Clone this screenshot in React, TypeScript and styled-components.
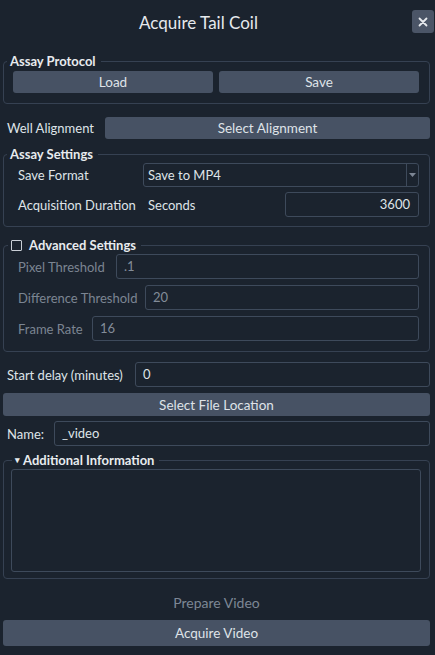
import React from 'react';
import styled, { createGlobalStyle } from 'styled-components';

const GlobalStyle = createGlobalStyle`
  html, body {
    margin: 0;
    padding: 0;
    background: #1b232e;
  }
  body {
    font-family: Lato, "Noto Sans", sans-serif;
    font-size: 13px;
    color: #dfe3e8;
  }
`;

export default function App() {
  return (
    <>
      <GlobalStyle />
      <Dialog>
        <Header>
          <Title>Acquire Tail Coil</Title>
          <CloseButton aria-label="close">
            <svg width="10" height="10" viewBox="0 0 10 10">
              <path d="M1.5 1.5 L8.5 8.5 M8.5 1.5 L1.5 8.5" stroke="#e6e9ed" strokeWidth="1.8" strokeLinecap="round" />
            </svg>
          </CloseButton>
        </Header>

        <Group>
          <Legend>Assay Protocol</Legend>
          <ButtonPair>
            <Button>Load</Button>
            <Button>Save</Button>
          </ButtonPair>
        </Group>

        <Row top={13}>
          <Label>Well Alignment</Label>
          <Button grow>Select Alignment</Button>
        </Row>

        <Group top={7} padTop={1} padBottom={9}>
          <Legend>Assay Settings</Legend>
          <FieldRow>
            <FieldLabel width={125}>Save Format</FieldLabel>
            <Combo>
              <span>Save to MP4</span>
              <ComboArrow>
                <svg width="7" height="4" viewBox="0 0 7 4">
                  <path d="M0 0 L7 0 L3.5 4 Z" fill="#7c8593" />
                </svg>
              </ComboArrow>
            </Combo>
          </FieldRow>
          <FieldRow gap={5}>
            <FieldLabel width={130}>Acquisition Duration</FieldLabel>
            <Unit>Seconds</Unit>
            <Input align="right" width={134}>3600</Input>
          </FieldRow>
        </Group>

        <Group top={10} padTop={1} padBottom={10}>
          <Legend indent={1}>
            <CheckBox />
            Advanced Settings
          </Legend>
          <FieldRow>
            <FieldLabel muted width={98}>Pixel Threshold</FieldLabel>
            <Input muted>.1</Input>
          </FieldRow>
          <FieldRow gap={6}>
            <FieldLabel muted width={127}>Difference Threshold</FieldLabel>
            <Input muted>20</Input>
          </FieldRow>
          <FieldRow gap={6}>
            <FieldLabel muted width={74}>Frame Rate</FieldLabel>
            <Input muted>16</Input>
          </FieldRow>
        </Group>

        <Row top={10}>
          <Label width={132}>Start delay (minutes)</Label>
          <Input>0</Input>
        </Row>
        <Row top={6}>
          <Button grow height={23}>Select File Location</Button>
        </Row>
        <Row top={5}>
          <Label width={51}>Name:</Label>
          <Input>_video</Input>
        </Row>

        <Group top={6} padTop={1} padBottom={6} padX={7}>
          <Legend indent={7}>
            <Caret>▾</Caret>
            Additional Information
          </Legend>
          <NotesBox />
        </Group>

        <PrepareButton disabled>Prepare Video</PrepareButton>
        <Button wide height={26}>Acquire Video</Button>
      </Dialog>
    </>
  );
}

const Dialog = styled.div`
  display: flex;
  flex-direction: column;
  padding: 0 5px 8px 3px;
  width: 427px;
`;

const Header = styled.div`
  display: flex;
  align-items: center;
  height: 44px;
  margin-right: -4px;
`;

const Title = styled.div`
  flex: 1;
  text-align: center;
  font-size: 17px;
  color: #e6e9ed;
  padding-right: 4px;
`;

const CloseButton = styled.button`
  display: flex;
  align-items: center;
  justify-content: center;
  width: 22px;
  height: 23px;
  margin: 0 0 1px 14px;
  padding: 0;
  border: none;
  border-radius: 3px;
  background: #4b5567;
`;

const Group = styled.fieldset<{ top?: number; padTop?: number; padBottom?: number; padX?: number }>`
  margin: ${(p) => p.top ?? 9}px 0 0;
  padding: ${(p) => p.padTop ?? 2}px ${(p) => (p.padX ? p.padX + 1 : 10)}px
    ${(p) => p.padBottom ?? 10}px ${(p) => p.padX ?? 9}px;
  border: 1px solid #364152;
  border-radius: 4px;
  min-width: 0;
  display: flex;
  flex-direction: column;
`;

const Legend = styled.legend<{ indent?: number }>`
  display: flex;
  align-items: center;
  height: 16px;
  line-height: 16px;
  margin-left: ${(p) => (p.indent ?? 0) - 6}px;
  padding: 0 5px 0 3px;
  font-weight: 700;
  font-size: 13px;
  color: #e8ebef;
`;

const CheckBox = styled.span`
  display: inline-block;
  box-sizing: border-box;
  width: 11px;
  height: 11px;
  border: 1px solid #c9ced5;
  border-radius: 1px;
  margin-right: 7px;
`;

const Caret = styled.span`
  font-size: 9px;
  margin-right: 3px;
  color: #e8ebef;
`;

const ButtonPair = styled.div`
  display: grid;
  grid-template-columns: 1fr 1fr;
  gap: 6px;
`;

const Button = styled.button<{ grow?: boolean; wide?: boolean; height?: number }>`
  height: ${(p) => p.height ?? 22}px;
  ${(p) => (p.grow ? 'flex: 1;' : '')}
  ${(p) => (p.wide ? 'margin-top: 6px;' : '')}
  padding: 0;
  border: none;
  border-radius: 3px;
  background: #475264;
  color: #dfe3e8;
  font-family: inherit;
  font-size: 13.5px;
`;

const PrepareButton = styled.button`
  margin-top: 12px;
  height: 23px;
  padding: 0;
  border: none;
  background: transparent;
  color: #7d8795;
  font-family: inherit;
  font-size: 14px;
`;

const Row = styled.div<{ top?: number }>`
  display: flex;
  align-items: center;
  margin-top: ${(p) => p.top ?? 0}px;
`;

const Label = styled.span<{ width?: number }>`
  width: ${(p) => p.width ?? 102}px;
  flex-shrink: 0;
  padding-left: 4px;
  box-sizing: border-box;
  white-space: nowrap;
`;

const FieldRow = styled.div<{ gap?: number }>`
  display: flex;
  align-items: center;
  margin-top: ${(p) => p.gap ?? 0}px;
  padding-left: 5px;
`;

const FieldLabel = styled.span<{ width: number; muted?: boolean }>`
  width: ${(p) => p.width}px;
  flex-shrink: 0;
  white-space: nowrap;
  color: ${(p) => (p.muted ? '#7b8592' : '#dfe3e8')};
`;

const Unit = styled.span`
  flex: 1;
`;

const Input = styled.div<{ align?: 'left' | 'right'; width?: number; muted?: boolean }>`
  ${(p) => (p.width ? `width: ${p.width}px;` : 'flex: 1;')}
  box-sizing: border-box;
  height: 25px;
  line-height: 23px;
  padding: 0 8px 0 7px;
  border: 1px solid #3e4a5b;
  border-radius: 3px;
  text-align: ${(p) => p.align ?? 'left'};
  color: ${(p) => (p.muted ? '#838c98' : '#dfe3e8')};
`;

const Combo = styled.div`
  flex: 1;
  display: flex;
  align-items: center;
  box-sizing: border-box;
  height: 24px;
  padding-left: 4px;
  border: 1px solid #3e4a5b;
  border-radius: 3px;

  span {
    flex: 1;
  }
`;

const ComboArrow = styled.div`
  display: flex;
  align-items: center;
  justify-content: center;
  width: 11px;
  height: 100%;
  border-left: 1px solid #3e4a5b;
`;

const NotesBox = styled.div`
  height: 103px;
  box-sizing: border-box;
  border: 1px solid #3e4a5b;
  border-radius: 3px;
`;
